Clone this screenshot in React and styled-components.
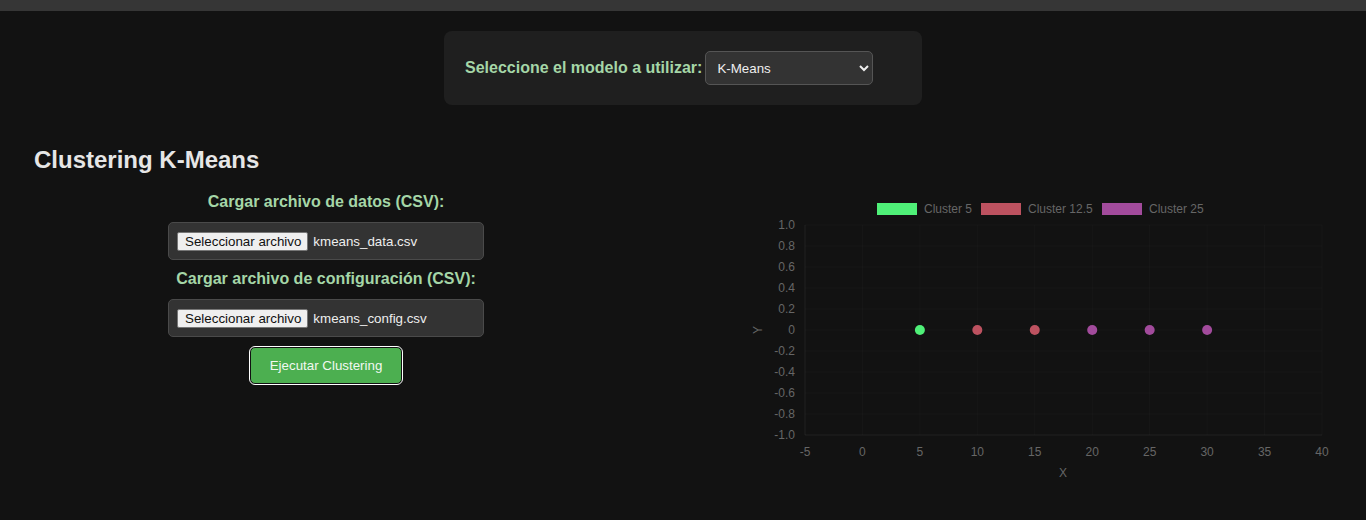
import React from "react";
import styled, { createGlobalStyle } from "styled-components";

const Global = createGlobalStyle`
  html, body { margin: 0; padding: 0; background: #121212; }
  body { font-family: "Liberation Sans", Arial, sans-serif; color: #e0e0e0; }
  * { box-sizing: border-box; }
`;

const Page = styled.div`
  min-height: 520px;
  background: #121212;
`;

const TopBar = styled.div`
  height: 11px;
  background: #363636;
`;

const ModelCard = styled.div`
  width: 478px;
  margin: 20px auto 0;
  padding: 20px 21px;
  background: #1f1f1f;
  border-radius: 8px;
  display: flex;
  align-items: center;
  gap: 3px;
`;

const GreenLabel = styled.label`
  color: #a5d6a7;
  font-weight: bold;
  font-size: 16px;
  line-height: 18px;
`;

const Select = styled.select`
  width: 168px;
  height: 34px;
  background: #333;
  color: #eee;
  border: 1px solid #555;
  border-radius: 5px;
  padding: 0 7px;
  font-family: "Liberation Sans", Arial, sans-serif;
  font-size: 13.33px;
  color-scheme: dark;
`;

const Section = styled.div`
  padding: 0 34px;
`;

const Title = styled.h2`
  margin: 41px 0 19px;
  font-size: 24px;
  font-weight: bold;
  color: #e6e6e6;
`;

const Row = styled.div`
  display: flex;
  justify-content: space-between;
  align-items: flex-start;
`;

const Column = styled.div`
  width: 45%;
  display: flex;
  flex-direction: column;
  align-items: center;
`;

const FileBox = styled.div`
  width: 316px;
  height: 38px;
  margin: 11px 0 10px;
  padding: 0 8px;
  background: #333;
  border: 1px solid #4a4a4a;
  border-radius: 5px;
  display: flex;
  align-items: center;
  gap: 5px;
  font-size: 13.33px;
`;

const FileButton = styled.span`
  display: inline-flex;
  align-items: center;
  height: 19px;
  padding: 0 6px 0 7px;
  background: #efefef;
  color: #111;
  border: 1px solid #767676;
  border-radius: 2px;
  font-size: 13.33px;
`;

const FileName = styled.span`
  color: #eee;
`;

const RunButton = styled.button`
  margin-top: 0;
  padding: 10px 19px;
  background: #4caf50;
  color: #f1f8f1;
  border: 1px solid #111;
  border-radius: 5px;
  outline: 1.5px solid #fff;
  font-family: "Liberation Sans", Arial, sans-serif;
  font-size: 13.33px;
  line-height: 15px;
  cursor: pointer;
`;

const ChartSvg = styled.svg`
  display: block;
  margin-left: auto;
  font-family: "Liberation Sans", Arial, sans-serif;
`;

const X0 = 57, X1 = 574, Y0 = 32, Y1 = 242;
const xMin = -5, xMax = 40;
const sx = (v) => X0 + ((v - xMin) / (xMax - xMin)) * (X1 - X0);
const sy = (v) => Y0 + ((1 - v) / 2) * (Y1 - Y0);

const xTicks = [-5, 0, 5, 10, 15, 20, 25, 30, 35, 40];
const yTicks = [1, 0.8, 0.6, 0.4, 0.2, 0, -0.2, -0.4, -0.6, -0.8, -1];
const fmtY = (v) => (v === 0 ? "0" : v.toFixed(1));

const GREEN = "#4ff078";
const RED = "#bd5260";
const PURPLE = "#a24b9c";

const legend = [
  { x: 129, color: GREEN, label: "Cluster 5" },
  { x: 233, color: RED, label: "Cluster 12.5" },
  { x: 354, color: PURPLE, label: "Cluster 25" },
];

const points = [
  { x: 5, c: GREEN },
  { x: 10, c: RED },
  { x: 15, c: RED },
  { x: 20, c: PURPLE },
  { x: 25, c: PURPLE },
  { x: 30, c: PURPLE },
];

function Chart() {
  return (
    <ChartSvg width="584" height="292" viewBox="0 0 584 292">
      {legend.map((l) => (
        <g key={l.label}>
          <rect x={l.x} y={10} width={40} height={12} fill={l.color} />
          <text x={l.x + 47} y={20.3} fontSize="12" fill="#666">
            {l.label}
          </text>
        </g>
      ))}
      {xTicks.map((t) => (
        <line key={"gx" + t} x1={sx(t)} x2={sx(t)} y1={Y0} y2={Y1} stroke="rgba(255,255,255,0.022)" />
      ))}
      {yTicks.map((t) => (
        <line key={"gy" + t} x1={X0} x2={X1} y1={sy(t)} y2={sy(t)} stroke="rgba(255,255,255,0.022)" />
      ))}
      <line x1={X0} x2={X0} y1={Y0} y2={Y1} stroke="rgba(255,255,255,0.05)" />
      <line x1={X0} x2={X1} y1={Y1} y2={Y1} stroke="rgba(255,255,255,0.05)" />
      {yTicks.map((t) => (
        <text key={"ly" + t} x={47} y={sy(t) + 4.3} fontSize="12" fill="#666" textAnchor="end">
          {fmtY(t)}
        </text>
      ))}
      {xTicks.map((t) => (
        <text key={"lx" + t} x={sx(t)} y={263.3} fontSize="12" fill="#666" textAnchor="middle">
          {t}
        </text>
      ))}
      <text x={315} y={284.3} fontSize="12" fill="#666" textAnchor="middle">X</text>
      <text
        x={0}
        y={0}
        fontSize="12"
        fill="#666"
        textAnchor="middle"
        transform={`translate(14 ${sy(0)}) rotate(-90)`}
      >
        Y
      </text>
      {points.map((p) => (
        <circle key={p.x} cx={sx(p.x)} cy={sy(0)} r={5} fill={p.c} />
      ))}
    </ChartSvg>
  );
}

export default function App() {
  return (
    <Page>
      <Global />
      <TopBar />
      <ModelCard>
        <GreenLabel htmlFor="model">Seleccione el modelo a utilizar:</GreenLabel>
        <Select id="model" defaultValue="kmeans">
          <option value="kmeans">K-Means</option>
        </Select>
      </ModelCard>
      <Section>
        <Title>Clustering K-Means</Title>
        <Row>
          <Column>
            <GreenLabel>Cargar archivo de datos (CSV):</GreenLabel>
            <FileBox>
              <FileButton>Seleccionar archivo</FileButton>
              <FileName>kmeans_data.csv</FileName>
            </FileBox>
            <GreenLabel>Cargar archivo de configuración (CSV):</GreenLabel>
            <FileBox>
              <FileButton>Seleccionar archivo</FileButton>
              <FileName>kmeans_config.csv</FileName>
            </FileBox>
            <RunButton>Ejecutar Clustering</RunButton>
          </Column>
          <Column>
            <Chart />
          </Column>
        </Row>
      </Section>
    </Page>
  );
}
